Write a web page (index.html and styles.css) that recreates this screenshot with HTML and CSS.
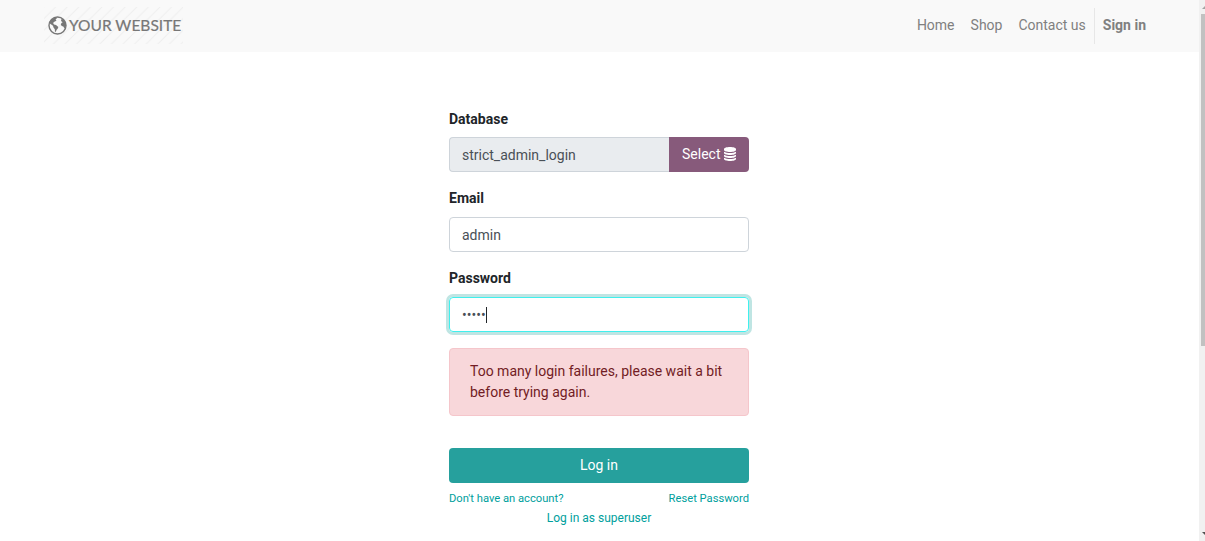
FILE: index.html
```html
<!DOCTYPE html>
<html lang="en">
<head>
<meta charset="utf-8">
<title>Login | Your Website</title>
<link rel="stylesheet" href="styles.css">
</head>
<body>
<div class="page">
  <header class="navbar">
    <a class="brand">
      <svg class="stripes" width="139" height="37" viewBox="0 0 139 37" aria-hidden="true">
        <defs><pattern id="diag" width="11.6" height="11.6" patternUnits="userSpaceOnUse"><path d="M-1 12.6L12.6 -1M-1 1L1 -1M10.6 12.6L12.6 10.6" stroke="#eeeeee" stroke-width="1"/></pattern></defs>
        <rect width="139" height="37" fill="url(#diag)"/>
      </svg>
      <svg class="globe" viewBox="0 0 19 19" aria-hidden="true">
        <circle cx="9.5" cy="9.5" r="8.5" fill="none" stroke="#777" stroke-width="1.4"/>
        <path fill="#777" d="M3.500 3.500L7 1.500L9 2.200L7.500 3.500L8.500 4.600L7 5.600L5.800 6L5.200 7.300L6 8.500L8 9L10.300 10.900L9.800 12.600L8.500 14L7.800 16L7 15.600L6.800 13.200L5.500 11.500L5 9.800L1.500 7.200L2 5.300Z"/>
        <path fill="#777" d="M13.500 3L15.400 3.200L18 7.400L18 9.700L16.500 12.400L15.300 10.500L13.700 10.100L12.800 8.600L13.500 7L14.700 6.300L13 5Z"/>
      </svg>
      <span class="brand-name">YOUR WEBSITE</span>
    </a>
    <nav class="menu">
      <a>Home</a><a>Shop</a><a>Contact us</a><a class="signin">Sign in</a>
    </nav>
  </header>
  <form class="login">
    <label>Database</label>
    <div class="group">
      <div class="control readonly">strict_admin_login</div>
      <a class="select">Select
        <svg class="db" viewBox="0 0 12 14" aria-hidden="true"><path fill="#fff" d="M6 0c3.3 0 6 .9 6 2v1c0 1.100-2.700 2-6 2S0 4.100 0 3V2C0 .9 2.700 0 6 0zM0 4.700C1.300 5.600 3.700 6 6 6s4.700-.4 6-1.300V6c0 1.100-2.700 2-6 2S0 7.100 0 6zM0 7.700C1.300 8.600 3.700 9 6 9s4.700-.4 6-1.300V9c0 1.100-2.700 2-6 2s-6-.9-6-2zM0 10.700c1.300.9 3.700 1.300 6 1.300s4.700-.4 6-1.300V12c0 1.100-2.700 2-6 2s-6-.9-6-2z"/></svg>
      </a>
    </div>
    <label>Email</label>
    <div class="control">admin</div>
    <label>Password</label>
    <div class="control focused">•••••<span class="caret"></span></div>
    <p class="alert">Too many login failures, please wait a bit before trying again.</p>
    <a class="submit">Log in</a>
    <div class="links"><a>Don't have an account?</a><a>Reset Password</a></div>
    <a class="superuser">Log in as superuser</a>
  </form>
</div>
<div class="scrollbar">
  <svg class="arrow" width="6" height="14" viewBox="0 0 6 14"><path d="M3 9L6 6V9z" fill="#a3a3a3"/></svg>
  <div class="thumb"></div>
  <svg class="arrow" width="6" height="14" viewBox="0 0 6 14"><path d="M3 5H6V8z" fill="#505050"/></svg>
</div>
</body>
</html>
```
FILE: styles.css
```css
* { box-sizing: border-box; }
body {
  margin: 0;
  height: 541px;
  display: flex;
  overflow: hidden;
  background: #fff;
  font: 14px/21px Roboto, sans-serif;
  color: #212529;
}
.page {
  flex: 1;
  display: flex;
  flex-direction: column;
}
.navbar {
  height: 52px;
  padding: 0 45px 0 44px;
  display: flex;
  align-items: center;
  justify-content: space-between;
  background: #f9f9f9;
}
.brand {
  position: relative;
  display: flex;
  align-items: center;
  width: 139px;
  height: 37px;
  padding: 0 0 2px 4px;
}
.stripes { position: absolute; left: 0; top: -1px; }
.globe { position: relative; width: 19px; height: 19px; }
.brand-name {
  position: relative;
  margin-left: 2px;
  font: 15.5px/20px Lato, sans-serif;
  -webkit-text-stroke: 0.2px #777;
  color: #777;
  white-space: nowrap;
}
.menu { display: flex; color: #808080; }
.menu a { padding: 7px 8px 8px; }
.menu .signin { border-left: 1px solid #e7e7e7; font-weight: 700; }
.login {
  width: 300px;
  margin: 57px 0 0 449px;
  display: flex;
  flex-direction: column;
}
label { font-weight: 700; margin-bottom: 8px; }
label:first-child { margin-bottom: 7px; }
.control {
  height: 35px;
  padding: 7px 12px 5px;
  margin-bottom: 16px;
  border: 1px solid #ced4da;
  border-radius: 4px;
  color: #495057;
}
.group { display: flex; height: 35px; margin-bottom: 16px; }
.readonly {
  flex: 1;
  background: #e9ecef;
  border-right: 0;
  border-radius: 4px 0 0 4px;
}
.select {
  width: 80px;
  padding: 7px 0 0 13px;
  border-radius: 0 4px 4px 0;
  background: #875a7b;
  color: #fff;
  white-space: nowrap;
}
.db { width: 12px; height: 14px; vertical-align: -2px; }
.focused {
  display: flex;
  align-items: center;
  border-color: #40f0ee;
  box-shadow: 0 0 0 3px #bfe5e3;
}
.caret { width: 1px; height: 16px; margin-top: -2px; background: #212529; }
.alert {
  margin: 0 0 32px;
  padding: 12px 20px;
  border: 1px solid #f5c6cb;
  border-radius: 4px;
  background: #f8d7da;
  color: #721c24;
}
.submit {
  height: 35px;
  padding-top: 7px;
  border-radius: 4px;
  background: #26a09d;
  color: #fff;
  text-align: center;
}
.links {
  display: flex;
  justify-content: space-between;
  padding-top: 7px;
  font-size: 11.2px;
  line-height: 17px;
  color: #00a09d;
}
.superuser {
  padding-top: 2px;
  font-size: 12px;
  line-height: 18px;
  text-align: center;
  color: #00a09d;
}
.scrollbar {
  width: 6px;
  display: flex;
  flex-direction: column;
  background: #f1f1f1;
}
.thumb { height: 332px; margin: 0 0 auto 2px; background: #c1c1c1; }
```
